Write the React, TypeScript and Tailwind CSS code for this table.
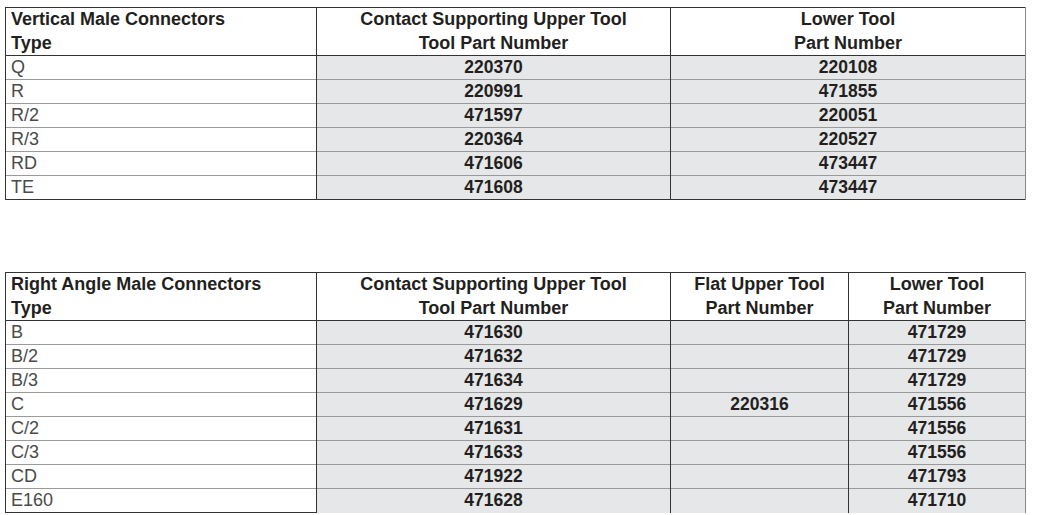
const vertical = [
  ["Q", "220370", "220108"],
  ["R", "220991", "471855"],
  ["R/2", "471597", "220051"],
  ["R/3", "220364", "220527"],
  ["RD", "471606", "473447"],
  ["TE", "471608", "473447"],
];

const rightAngle = [
  ["B", "471630", "", "471729"],
  ["B/2", "471632", "", "471729"],
  ["B/3", "471634", "", "471729"],
  ["C", "471629", "220316", "471556"],
  ["C/2", "471631", "", "471556"],
  ["C/3", "471633", "", "471556"],
  ["CD", "471922", "", "471793"],
  ["E160", "471628", "", "471710"],
];

const th = "p-0 font-bold text-[18px] leading-[23.5px] text-[#231f20] align-top";
const typeCell = "h-[23px] p-0 pl-[5px] text-[18px] leading-[23px] text-[#4a4a4a] border-l border-r border-[#333] bg-white";
const numCell = "h-[23px] p-0 text-center font-bold text-[17.5px] leading-[23px] text-[#231f20] bg-[#e6e7e8] border-l border-[#333]";

export default function App() {
  return (
    <div className="min-h-[515px] bg-white pl-[5px] pt-[7px]" style={{ fontFamily: '"Liberation Sans", Arial, sans-serif' }}>
      <table className="table-fixed border-collapse">
        <colgroup>
          <col className="w-[311px]" />
          <col className="w-[354px]" />
          <col className="w-[355px]" />
        </colgroup>
        <thead>
          <tr className="h-[47px] border-t border-b border-[#333]">
            <th className={`${th} pl-[5px] text-left border-l border-[#333]`}>
              Vertical Male Connectors
              <br />
              Type
            </th>
            <th className={`${th} text-center border-l border-[#333]`}>
              Contact Supporting Upper Tool
              <br />
              Tool Part Number
            </th>
            <th className={`${th} text-center border-l border-r border-[#333] border-r-[#888]`}>
              Lower Tool
              <br />
              Part Number
            </th>
          </tr>
        </thead>
        <tbody>
          {vertical.map((r, i) => (
            <tr key={r[0]} className={`border-t ${i === 0 ? "border-[#333]" : "border-[#9a9a9a]"} ${i === vertical.length - 1 ? "border-b border-b-[#333]" : ""}`}>
              <td className={typeCell}>{r[0]}</td>
              <td className={numCell}>{r[1]}</td>
              <td className={`${numCell} border-r border-r-[#888]`}>{r[2]}</td>
            </tr>
          ))}
        </tbody>
      </table>

      <table className="mt-[72px] table-fixed border-collapse">
        <colgroup>
          <col className="w-[311px]" />
          <col className="w-[354px]" />
          <col className="w-[178px]" />
          <col className="w-[177px]" />
        </colgroup>
        <thead>
          <tr className="h-[47px] border-t border-b border-[#333]">
            <th className={`${th} pl-[5px] text-left border-l border-[#333]`}>
              Right Angle Male Connectors
              <br />
              Type
            </th>
            <th className={`${th} text-center border-l border-[#333]`}>
              Contact Supporting Upper Tool
              <br />
              Tool Part Number
            </th>
            <th className={`${th} text-center border-l border-[#333]`}>
              Flat Upper Tool
              <br />
              Part Number
            </th>
            <th className={`${th} text-center border-l border-r border-[#333] border-r-[#888]`}>
              Lower Tool
              <br />
              Part Number
            </th>
          </tr>
        </thead>
        <tbody>
          {rightAngle.map((r, i) => (
            <tr key={r[0]} className={`border-t ${i === 0 ? "border-[#333]" : "border-[#9a9a9a]"}`}>
              <td className={`${typeCell} ${i === rightAngle.length - 1 ? "border-b border-b-[#333]" : ""}`}>{r[0]}</td>
              <td className={numCell}>{r[1]}</td>
              <td className={numCell}>{r[2]}</td>
              <td className={`${numCell} border-r border-r-[#888]`}>{r[3]}</td>
            </tr>
          ))}
        </tbody>
      </table>
    </div>
  );
}
